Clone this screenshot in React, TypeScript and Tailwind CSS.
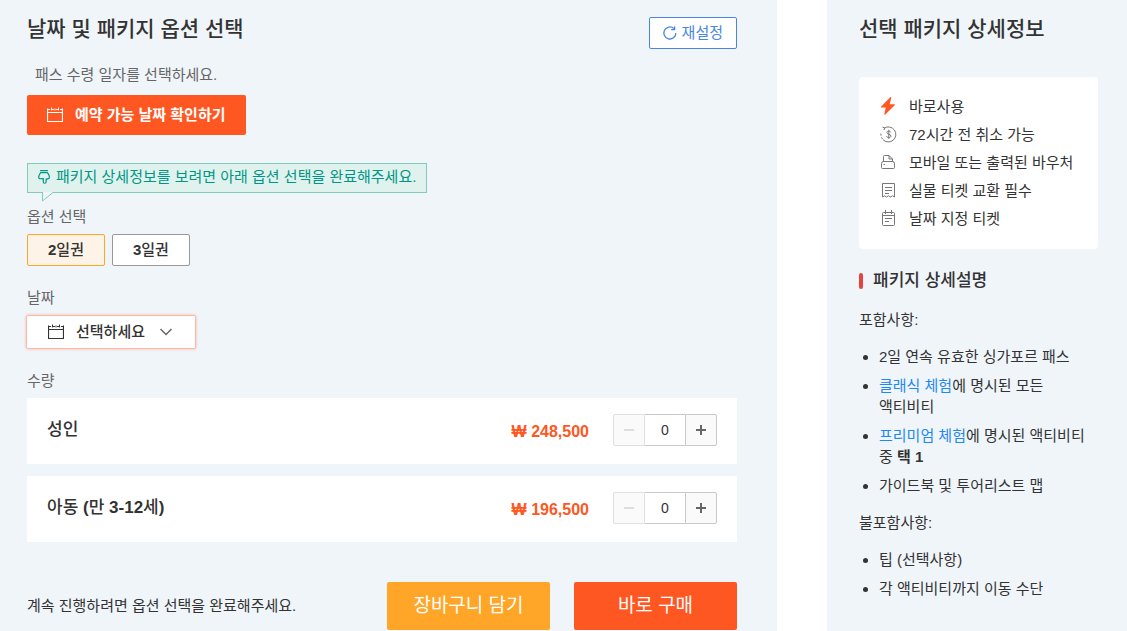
import { useState } from 'react';
import type { ReactNode } from 'react';

type IconProps = { className?: string };

function CalendarIcon({ className }: IconProps) {
  return (
    <svg className={className} width="16" height="16" viewBox="0 0 16 16" fill="none" stroke="currentColor" aria-hidden="true">
      <path d="M0.5 1.5v13h15v-13M0.5 5.5h15" strokeWidth="1.2" />
      <path d="M1 2.5h2M5 2.5h2M9 2.5h2M13 2.5h2M4.5 0.5v3M8 1.5v2M11.5 0.5v3" />
    </svg>
  );
}

function ResetIcon() {
  return (
    <svg width="14" height="14" viewBox="0 0 14 14" fill="none" stroke="currentColor" strokeWidth="1.3" aria-hidden="true">
      <path d="M12.9 7A6 6 0 1 1 10.8 2.4" />
      <path d="M11.6 0.4v3.2H8.2" />
    </svg>
  );
}

function PointDownIcon() {
  return (
    <svg width="12" height="14" viewBox="0 0 12 14" fill="none" stroke="currentColor" strokeWidth="1.2" strokeLinejoin="round" strokeLinecap="round" aria-hidden="true">
      <path d="M2.5 0.6h7" />
      <path d="M2.6 2.6h6.8c.7 1.4 1.9 2.2 1.9 3.9v1.3c0 .9-.8 1.1-1.4.8-.4.7-1.3.7-1.8.2v3.3c0 1.5-2.8 1.5-2.8 0V8.4c-.6.6-1.500.7-2 .2C2 9 .7 8.700.7 7.500c0-2.200 1.200-3.400 1.900-4.900z" />
    </svg>
  );
}

function BoltIcon() {
  return (
    <svg width="16" height="18" viewBox="0 0 16 18" fill="#ff5722" aria-hidden="true">
      <path d="M10.2 0.3 1 9.8c-.3.4-.1.8.3.8h4.5L4.3 17c-.1.8.6 1 1 .5L14.7 8.2c.4-.4.2-.9-.3-.9H9.7l1.5-6.3c.2-.9-.5-1.2-1-.7z" />
    </svg>
  );
}

function RefundIcon() {
  return (
    <svg width="17" height="17" viewBox="0 0 17 17" fill="none" stroke="currentColor" strokeWidth="1" aria-hidden="true">
      <path d="M4.2 2.2A7.5 7.5 0 1 1 3 13.7" />
      <path d="M2.5 1.2 4.6 1.8 4 4M0.8 7.5l.3 2.2M1.5 11.3l1 1.8" />
      <path d="M10.7 6.4C10.4 5.4 9.7 5 8.7 5 7.6 5 6.9 5.6 6.9 6.5c0 2.2 4 1.2 4 3.5 0 1-.8 1.6-2.1 1.6-1.2 0-2-.6-2.2-1.6M8.8 3.8v9" />
    </svg>
  );
}

function PrinterIcon() {
  return (
    <svg width="14" height="14" viewBox="0 0 14 14" fill="none" stroke="currentColor" strokeLinejoin="round" aria-hidden="true">
      <path d="M2.5 7V1.5a1 1 0 0 1 1-1H8L11.5 4v3M8 0.5V4h3.5" />
      <path d="M2.5 6.500h9a2 2 0 0 1 2 2v4a1 1 0 0 1-1 1h-11a1 1 0 0 1-1-1v-4a2 2 0 0 1 2-2zM2.5 9.5H4" />
    </svg>
  );
}

function TicketIcon() {
  return (
    <svg width="13" height="15" viewBox="0 0 13 15" fill="none" stroke="currentColor" aria-hidden="true">
      <path d="M0.5 14V0.5h12V14l-2-1.2-2 1.2-2-1.2-2 1.2-2-1.2z" />
      <path d="M3 4.5h7M3 7.5h7M3 10.5h4" />
    </svg>
  );
}

function DateIcon() {
  return (
    <svg width="13" height="16" viewBox="0 0 13 16" fill="none" stroke="currentColor" aria-hidden="true">
      <path d="M1.5 2.5h10a1 1 0 0 1 1 1v11a1 1 0 0 1-1 1h-10a1 1 0 0 1-1-1v-11a1 1 0 0 1 1-1zM0.5 5.5h12M3.5 0v4M9.5 0v4" />
      <path d="M3 8.5h7M3 11.5h4" />
    </svg>
  );
}

const features: { icon: ReactNode; label: string }[] = [
  { icon: <BoltIcon />, label: '바로사용' },
  { icon: <RefundIcon />, label: '72시간 전 취소 가능' },
  { icon: <PrinterIcon />, label: '모바일 또는 출력된 바우처' },
  { icon: <TicketIcon />, label: '실물 티켓 교환 필수' },
  { icon: <DateIcon />, label: '날짜 지정 티켓' },
];

const passes = [
  { days: 2, name: '일권' },
  { days: 3, name: '일권' },
];

const tickets = [
  { id: 'adult', label: '성인', name: <>성인</>, price: '248,500' },
  {
    id: 'child',
    label: '아동 (만 3-12세)',
    name: <>아동 <b>(</b>만 <b>3-12</b>세<b>)</b></>,
    price: '196,500',
  },
];

function Stepper({ id, label }: { id: string; label: string }) {
  const [count, setCount] = useState(0);

  return (
    <div className="flex h-8">
      <button
        type="button"
        aria-label={`${label} 빼기`}
        disabled={count === 0}
        onClick={() => setCount(count - 1)}
        className="flex w-8 items-center justify-center rounded-l-xs border border-[#c8c8c8] bg-[#fafafa] text-[#666] disabled:border-[#e0e0e0] disabled:text-[#ddd]"
      >
        <svg width="10" height="10" viewBox="0 0 10 10" stroke="currentColor" strokeWidth="2" aria-hidden="true">
          <path d="M0 5h10" />
        </svg>
      </button>
      <input
        id={id}
        aria-label={label}
        inputMode="numeric"
        value={count}
        onChange={(e) => setCount(Number(e.target.value) || 0)}
        className="w-10 border-y border-[#c8c8c8] bg-white text-center text-sm text-[#333] outline-none"
      />
      <button
        type="button"
        aria-label={`${label} 더하기`}
        onClick={() => setCount(count + 1)}
        className="flex w-8 items-center justify-center rounded-r-xs border border-[#c8c8c8] bg-[#fafafa] text-[#666]"
      >
        <svg width="10" height="10" viewBox="0 0 10 10" stroke="currentColor" strokeWidth="2" aria-hidden="true">
          <path d="M0 5h10M5 0v10" />
        </svg>
      </button>
    </div>
  );
}

function OptionPanel() {
  const [days, setDays] = useState(2);

  return (
    <main className="min-w-0 flex-1 bg-[#f0f5fa] pt-[17px] pr-10 pl-[27px]">
      <div className="flex h-8 items-start justify-between">
        <h1 className="text-[21px] leading-6 font-medium">날짜 및 패키지 옵션 선택</h1>
        <button
          type="button"
          onClick={() => setDays(2)}
          className="flex h-8 items-center gap-[5px] rounded-xs border border-[#4985e6] bg-white px-[13px] leading-5 text-[#4985e6]"
        >
          <ResetIcon />
          재설정
        </button>
      </div>

      <p className="mt-[15px] mb-[9px] pl-2 leading-[22px] text-[#666]">패스 수령 일자를 선택하세요.</p>
      <button type="button" className="flex h-10 items-center gap-3 rounded-xs bg-[#ff5722] px-5 font-bold text-white">
        <CalendarIcon />
        예약 가능 날짜 확인하기
      </button>

      {/* Notice bubble */}
      <div className="relative mt-7 flex h-[30px] w-fit items-center gap-[6px] border border-[#80cbbb] bg-[#e0f2ed] px-[10px] pb-0.5 leading-5 text-[#009685]">
        <PointDownIcon />
        <span>패키지 상세정보를 보려면 아래 옵션 선택을 완료해주세요.</span>
        <svg className="absolute top-full left-[14px]" width="12" height="10" viewBox="0 0 12 10" aria-hidden="true">
          <path d="M0.5 0v9L11 0.5V0z" fill="#f0f5fa" />
          <path d="M0.5 0v9L11 0.5" fill="none" stroke="#80cbbb" />
        </svg>
      </div>

      <h2 className="mt-[13px] mb-[6px] leading-[22px] text-[#666]">옵션 선택</h2>
      <div className="flex gap-[7px]">
        {passes.map((pass) => (
          <button
            key={pass.days}
            type="button"
            aria-pressed={days === pass.days}
            onClick={() => setDays(pass.days)}
            className="h-8 rounded-xs border border-[#999] bg-white px-5 leading-5 font-medium aria-pressed:border-[#ffa628] aria-pressed:bg-[#fef3e7]"
          >
            <b>{pass.days}</b>
            {pass.name}
          </button>
        ))}
      </div>

      <h2 className="mt-[21px] mb-[6px] leading-[22px] text-[#666]">날짜</h2>
      <button
        type="button"
        aria-haspopup="dialog"
        className="-ml-px flex h-[34px] items-center gap-3 rounded-xs border border-[#ffb8a3] bg-white pr-[23px] pl-[21px] leading-5 font-medium shadow-[0_0_3px_#ff572266]"
      >
        <CalendarIcon />
        선택하세요
        <svg className="ml-[3px]" width="12" height="8" viewBox="0 0 12 8" fill="none" stroke="#666" strokeWidth="1.5" aria-hidden="true">
          <path d="M0.5 1 6 6.5 11.5 1" />
        </svg>
      </button>

      <h2 className="mt-[21px] mb-[6px] leading-[22px] text-[#666]">수량</h2>
      <div className="space-y-3">
        {tickets.map((ticket) => (
          <div key={ticket.id} className="flex items-start bg-white px-5 py-4">
            <label htmlFor={ticket.id} className="flex-1 text-[17px] leading-8 font-medium">
              {ticket.name}
            </label>
            <span className="mr-6 pt-0.5 text-base leading-8 font-bold text-[#ff5722]">₩ {ticket.price}</span>
            <Stepper id={ticket.id} label={ticket.label} />
          </div>
        ))}
      </div>

      <div className="mt-10 flex items-center gap-6">
        <p className="flex-1 leading-[22px]">계속 진행하려면 옵션 선택을 완료해주세요.</p>
        <button type="button" className="h-12 w-[163px] rounded-xs bg-[#ffa628] text-[19px] text-white">
          장바구니 담기
        </button>
        <button type="button" className="h-12 w-[163px] rounded-xs bg-[#ff5722] text-[19px] text-white">
          바로 구매
        </button>
      </div>
    </main>
  );
}

function DetailPanel() {
  return (
    <aside className="w-[300px] shrink-0 bg-[#f0f5fa] pt-[17px] pr-[29px] pl-8 break-keep">
      <h1 className="text-[21px] leading-6 font-medium">선택 패키지 상세정보</h1>

      <ul className="mt-9 rounded-sm bg-white px-5 pt-[15px] pb-[17px]">
        {features.map((item) => (
          <li key={item.label} className="flex h-7 items-center gap-3 whitespace-nowrap">
            <span className="flex w-[18px] justify-center text-[#777]">{item.icon}</span>
            <span className="pt-0.5">{item.label}</span>
          </li>
        ))}
      </ul>

      <h2 className="mt-5 flex items-center gap-[10px] text-[17px] leading-6 font-medium">
        <span className="h-4 w-1 rounded-xs bg-[#e64340]" />
        패키지 상세설명
      </h2>

      <div className="mt-4 space-y-4 leading-[21px]">
        <p>포함사항:</p>
        <ul className="list-disc space-y-2 pl-5">
          <li>2일 연속 유효한 싱가포르 패스</li>
          <li>
            <a href="#classic" className="text-[#1e88f5]">클래식 체험</a>에 명시된 모든 액티비티
          </li>
          <li>
            <a href="#premium" className="text-[#1e88f5]">프리미엄 체험</a>에 명시된 액티비티 중 <b className="font-bold">택 1</b>
          </li>
          <li>가이드북 및 투어리스트 맵</li>
        </ul>
        <p>불포함사항:</p>
        <ul className="list-disc space-y-2 pl-5">
          <li>팁 (선택사항)</li>
          <li>각 액티비티까지 이동 수단</li>
        </ul>
      </div>
    </aside>
  );
}

export default function App() {
  return (
    <div
      lang="ko"
      className="flex min-h-screen gap-[50px] bg-white font-['Liberation_Sans','Noto_Sans_CJK_KR',sans-serif] text-[15px] text-[#333]"
    >
      <OptionPanel />
      <DetailPanel />
    </div>
  );
}
